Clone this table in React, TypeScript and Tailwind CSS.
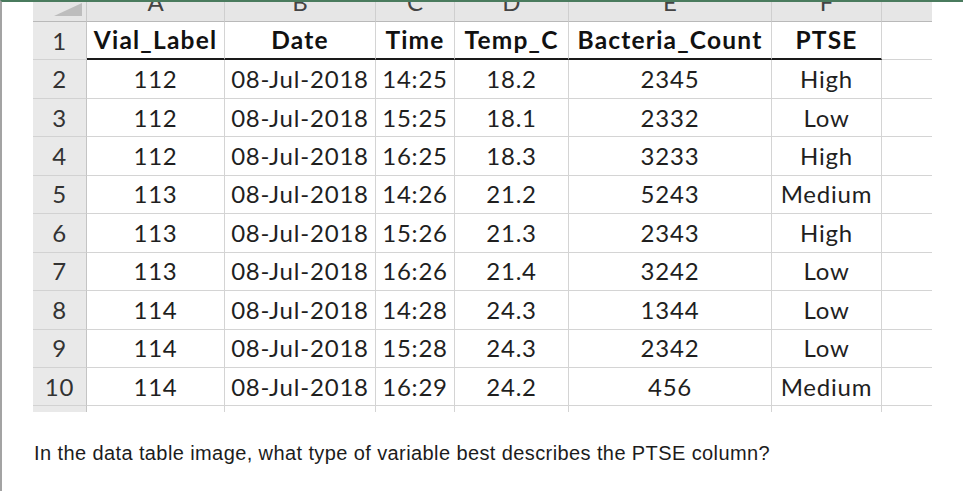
import React from 'react';

const letters = ['A', 'B', 'C', 'D', 'E', 'F', ''];
const headers = ['Vial_Label', 'Date', 'Time', 'Temp_C', 'Bacteria_Count', 'PTSE'];

const rows = [
  ['112', '08-Jul-2018', '14:25', '18.2', '2345', 'High'],
  ['112', '08-Jul-2018', '15:25', '18.1', '2332', 'Low'],
  ['112', '08-Jul-2018', '16:25', '18.3', '3233', 'High'],
  ['113', '08-Jul-2018', '14:26', '21.2', '5243', 'Medium'],
  ['113', '08-Jul-2018', '15:26', '21.3', '2343', 'High'],
  ['113', '08-Jul-2018', '16:26', '21.4', '3242', 'Low'],
  ['114', '08-Jul-2018', '14:28', '24.3', '1344', 'Low'],
  ['114', '08-Jul-2018', '15:28', '24.3', '2342', 'Low'],
  ['114', '08-Jul-2018', '16:29', '24.2', '456', 'Medium'],
];

const gridCols = 'grid grid-cols-[54px_138px_151px_79px_114px_203px_110px_50px]';

function RowHead({ n, last }: { n: string; last?: boolean }) {
  return (
    <div
      className={`flex items-center justify-center bg-[#e9e9e9] border-r border-r-[#c4c4c4] text-[#333] tracking-[0.8px] ${
        last ? 'h-[6px]' : 'h-[38.45px] border-b border-b-[#d2d2d2]'
      }`}
    >
      {n}
    </div>
  );
}

export default function App() {
  return (
    <div className="w-[963px] h-[491px] bg-white border-t-2 border-t-[#4a7b5e] border-l-2 border-l-[#a3a3a3] overflow-hidden">
      <div className="pl-[31px] font-['Lato',sans-serif] text-[24px]">
        {/* column letters */}
        <div className={gridCols}>
          <div className="relative h-[20px] bg-[#e6e6e6] border-r border-r-[#c9c9c9] border-b border-b-[#b9b9b9]">
            <svg className="absolute right-[4px] bottom-[5px]" width="28" height="13" viewBox="0 0 28 13">
              <polygon points="28,0 28,13 0,13" fill="#bdbdbd" />
            </svg>
          </div>
          {letters.map((l, i) => (
            <div
              key={i}
              className={`h-[20px] overflow-hidden flex justify-center bg-[#e6e6e6] border-b border-b-[#b9b9b9] ${
                i < 6 ? 'border-r border-r-[#cfcfcf]' : ''
              }`}
            >
              <span className="leading-[20px] text-[24px] -mt-[10px] text-[#444]">{l}</span>
            </div>
          ))}
        </div>

        {/* header row */}
        <div className={gridCols}>
          <RowHead n="1" />
          {headers.map((h) => (
            <div
              key={h}
              className="h-[38.45px] flex items-center justify-center font-bold text-[24.5px] tracking-[1.2px] text-[#111] border-r border-r-[#d4d4d4] border-b-2 border-b-[#1a1a1a]"
            >
              {h}
            </div>
          ))}
          <div className="h-[38.45px] border-b border-b-[#d4d4d4]" />
        </div>

        {/* data rows */}
        {rows.map((r, ri) => (
          <div key={ri} className={gridCols}>
            <RowHead n={String(ri + 2)} />
            {r.map((c, ci) => (
              <div
                key={ci}
                className="h-[38.45px] flex items-center justify-center tracking-[0.8px] text-[#1f1f1f] border-r border-r-[#d4d4d4] border-b border-b-[#d4d4d4]"
              >
                {c}
              </div>
            ))}
            <div className="h-[38.45px] border-b border-b-[#d4d4d4]" />
          </div>
        ))}

        {/* partial row */}
        <div className={gridCols}>
          <RowHead n="" last />
          {headers.map((h) => (
            <div key={h} className="h-[6px] border-r border-r-[#d4d4d4]" />
          ))}
          <div className="h-[6px]" />
        </div>
      </div>

      <p className="mt-[29px] pl-[32px] font-['Liberation_Sans',Arial,sans-serif] text-[20px] tracking-[0.4px] leading-[24px] text-[#1c1c1c]">
        In the data table image, what type of variable best describes the PTSE column?
      </p>
    </div>
  );
}
